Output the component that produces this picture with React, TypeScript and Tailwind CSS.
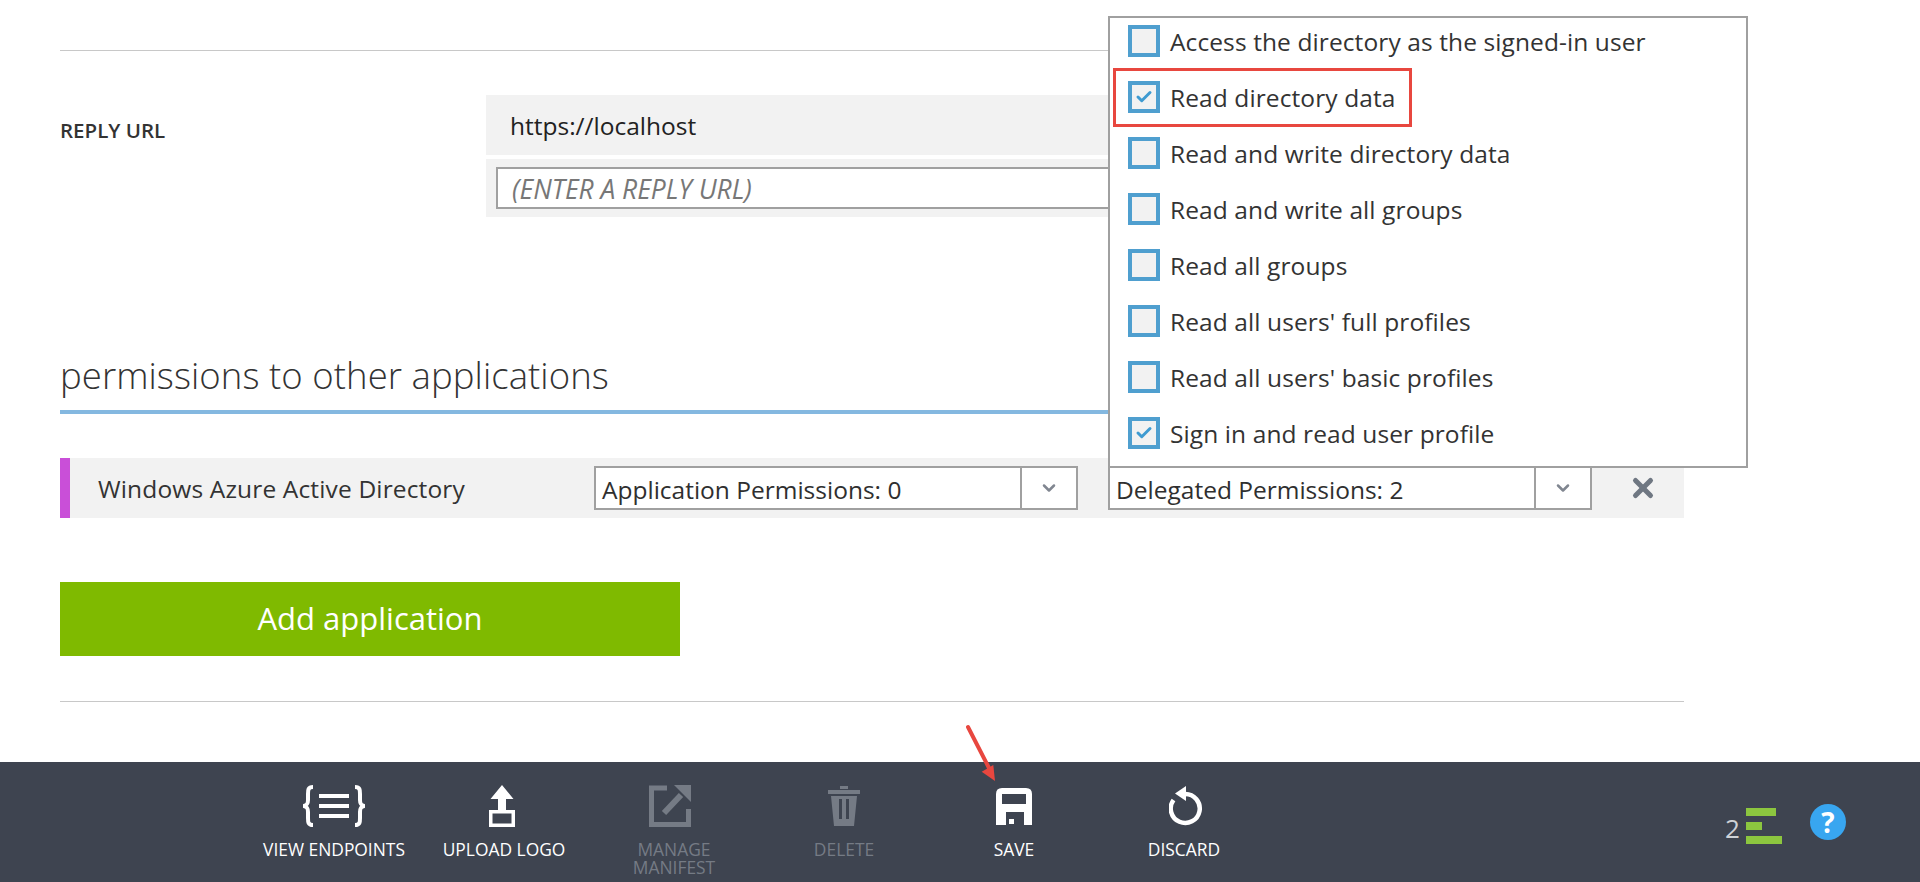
import { Check, ChevronDown, X } from 'lucide-react';
import type { ReactNode } from 'react';

const scopes = [
  ['Access the directory as the signed-in user', false],
  ['Read directory data', true],
  ['Read and write directory data', false],
  ['Read and write all groups', false],
  ['Read all groups', false],
  ["Read all users' full profiles", false],
  ["Read all users' basic profiles", false],
  ['Sign in and read user profile', true],
] as const;

const EndpointsIcon = () => (
  <svg width="62" height="42" viewBox="0 0 62 42" fill="none" stroke="currentColor" strokeWidth="4">
    <path d="M10 2c-5 0-5 3-5 7v6c0 4-1 5-4 6 3 1 4 2 4 6v6c0 4 0 7 5 7" />
    <path d="M52 2c5 0 5 3 5 7v6c0 4 1 5 4 6-3 1-4 2-4 6v6c0 4 0 7-5 7" />
    <path d="M16 11h30M16 21h30M16 31h30" />
  </svg>
);

const UploadIcon = () => (
  <svg className="-translate-x-[2px]" width="26" height="42" viewBox="0 0 26 42" fill="none" stroke="currentColor">
    <path d="M13 0L24.5 14H17V26H9V14H1.5Z" fill="currentColor" stroke="none" />
    <rect x="1.75" y="26.75" width="22.5" height="13.5" strokeWidth="3.5" />
  </svg>
);

const ManifestIcon = () => (
  <svg className="-translate-x-[4px]" width="42" height="42" viewBox="0 0 42 42" fill="none" stroke="currentColor">
    <path d="M18 3H2.5V39.5H39.5V24" strokeWidth="5" />
    <path d="M25 0H42V17Z" fill="currentColor" stroke="none" />
    <path d="M32 10L15 28" strokeWidth="6" />
  </svg>
);

const TrashIcon = () => (
  <svg width="32" height="40" viewBox="0 0 32 40" fill="currentColor">
    <rect x="12" y="0" width="8" height="3" />
    <rect x="0" y="4" width="32" height="4" />
    <path fillRule="evenodd" d="M3 10H29L26 40H6ZM11 13V33H14V13ZM18 13V33H21V13Z" />
  </svg>
);

const SaveIcon = () => (
  <svg width="36" height="37" viewBox="0 0 36 37" fill="currentColor">
    <path
      fillRule="evenodd"
      d="M6 0H30Q36 0 36 6V37H28V24H10V37H0V6Q0 0 6 0ZM6 6V16H30V6ZM13 31H18V36H13Z"
    />
  </svg>
);

const DiscardIcon = () => (
  <svg className="translate-x-[2px]" width="34" height="40" viewBox="0 0 34 40" fill="none" stroke="currentColor">
    <path d="M17 0V15L6 7.5Z" fill="currentColor" stroke="none" />
    <path d="M16 8A14.5 14.5 0 1 1 4.5 14" strokeWidth="4.5" />
  </svg>
);

function Select({ label }: { label: string }) {
  return (
    <div className="flex h-[44px] w-[484px] shrink-0 border-2 border-[#a0a0a0] bg-white">
      <span className="flex-1 pl-[6px] text-[24.5px] leading-[44px] text-[#2f2f2f]">{label}</span>
      <span className="flex w-[56px] items-center justify-center border-l-2 border-[#a0a0a0]">
        <ChevronDown size={20} strokeWidth={3} className="text-[#808690]" />
      </span>
    </div>
  );
}

function Action({ icon, label, muted }: { icon: ReactNode; label: string; muted?: boolean }) {
  return (
    <div className={`flex w-[170px] flex-col items-center text-center ${muted ? 'text-[#757b85]' : 'text-white'}`}>
      <div className="flex h-[42px] items-center justify-center">{icon}</div>
      <p className="mt-[13px] w-[150px] text-[17.4px] leading-[18px]">{label}</p>
    </div>
  );
}

export default function App() {
  return (
    <div className="relative flex h-[882px] flex-col overflow-hidden bg-white font-['Open_Sans','Noto_Sans',sans-serif]">
      <main className="flex-1 pl-[60px]">
        <div className="w-[1624px]">
          <div className="mt-[50px] h-[1px] bg-[#c8c8c8]" />

          <section className="mt-[44px] flex">
            <div className="w-[426px] pt-[22px] text-[20.5px] font-semibold leading-[26px] text-[#333]">REPLY URL</div>
            <div className="flex-1">
              <div className="h-[60px] bg-[#f2f2f2] pl-[24px] text-[24.5px] leading-[62px] text-[#222]">https://localhost</div>
              <div className="mt-[4px] h-[58px] bg-[#f2f2f2] pl-[10px] pr-[60px] pt-[8px]">
                <div className="h-[42px] border-2 border-[#a0a0a0] bg-white pl-[14px] text-[26.4px] italic leading-[40px] text-[#777]">(ENTER A REPLY URL)</div>
              </div>
            </div>
          </section>

          <h2 className="mt-[135px] border-b-4 border-[#84b8e0] pb-[12px] text-[36.5px] font-light leading-[46px] tracking-[0.07px] text-[#333]">
            permissions to other applications
          </h2>

          <section className="mt-[44px] flex h-[60px] items-center bg-[#f2f2f2]">
            <span className="h-full w-[10px] bg-[#c94fd8]" />
            <span className="w-[524px] pl-[28px] pt-[3px] text-[24.5px] tracking-[0.15px] text-[#333]">Windows Azure Active Directory</span>
            <Select label="Application Permissions: 0" />
            <span className="w-[30px]" />
            <Select label="Delegated Permissions: 2" />
            <X size={30} strokeWidth={4} className="ml-[36px] text-[#6f7782]" />
          </section>

          <button className="mt-[64px] block h-[74px] w-[620px] bg-[#7fba00] pb-[2px] text-[31px] text-white">Add application</button>

          <div className="mt-[45px] h-[1px] bg-[#c8c8c8]" />
        </div>
      </main>

      <footer className="flex h-[120px] shrink-0 bg-[#3e4450] pl-[249px] pt-[23px]">
        <Action icon={<EndpointsIcon />} label="VIEW ENDPOINTS" />
        <Action icon={<UploadIcon />} label="UPLOAD LOGO" />
        <Action icon={<ManifestIcon />} label="MANAGE MANIFEST" muted />
        <Action icon={<TrashIcon />} label="DELETE" muted />
        <Action icon={<SaveIcon />} label="SAVE" />
        <Action icon={<DiscardIcon />} label="DISCARD" />
        <div className="ml-[456px] flex h-[40px] items-start pt-[23px]">
          <span className="mt-[7px] w-[21px] text-[26px] leading-[26px] text-[#cfd2d6]">2</span>
          <span className="flex w-[36px] flex-col gap-[6px]">
            <i className="block h-[8px] w-[30px] bg-[#8cc63f]" />
            <i className="block h-[8px] w-[16px] bg-[#8cc63f]" />
            <i className="block h-[8px] w-[36px] bg-[#8cc63f]" />
          </span>
          <span className="ml-[28px] flex h-[36px] w-[36px] -translate-y-[4px] items-center justify-center rounded-full bg-[#38a6f0] text-[28px] font-bold leading-none text-white">?</span>
        </div>
      </footer>

      {/* scope list opened over the delegated select */}
      <div className="absolute left-[1108px] top-[16px] w-[640px] border-2 border-[#a0a0a0] bg-white pb-[10px]">
        <ul className="flex flex-col gap-[10px]">
          {scopes.map(([label, checked]) => (
            <li key={label} className="flex h-[46px] items-center pl-[18px]">
              <span className="flex h-[32px] w-[32px] items-center justify-center border-[4px] border-[#4f9fcf] bg-[#f2f2f2]">
                {checked && <Check size={18} strokeWidth={4} className="text-[#3f9bd1]" />}
              </span>
              <span className="ml-[10px] pt-[2px] text-[24.5px] tracking-[0.1px] text-[#333]">{label}</span>
            </li>
          ))}
        </ul>
        <div className="absolute left-[3px] top-[50px] h-[59px] w-[299px] border-[3px] border-[#e8473f]" />
      </div>

      <svg className="absolute left-[960px] top-[720px]" width="44" height="66" viewBox="0 0 44 66" fill="none">
        <path d="M8 7L29 48" stroke="#e8473f" strokeWidth="4" strokeLinecap="round" />
        <path d="M35 61L21.7 51.7L33.3 45Z" fill="#e8473f" />
      </svg>
    </div>
  );
}
